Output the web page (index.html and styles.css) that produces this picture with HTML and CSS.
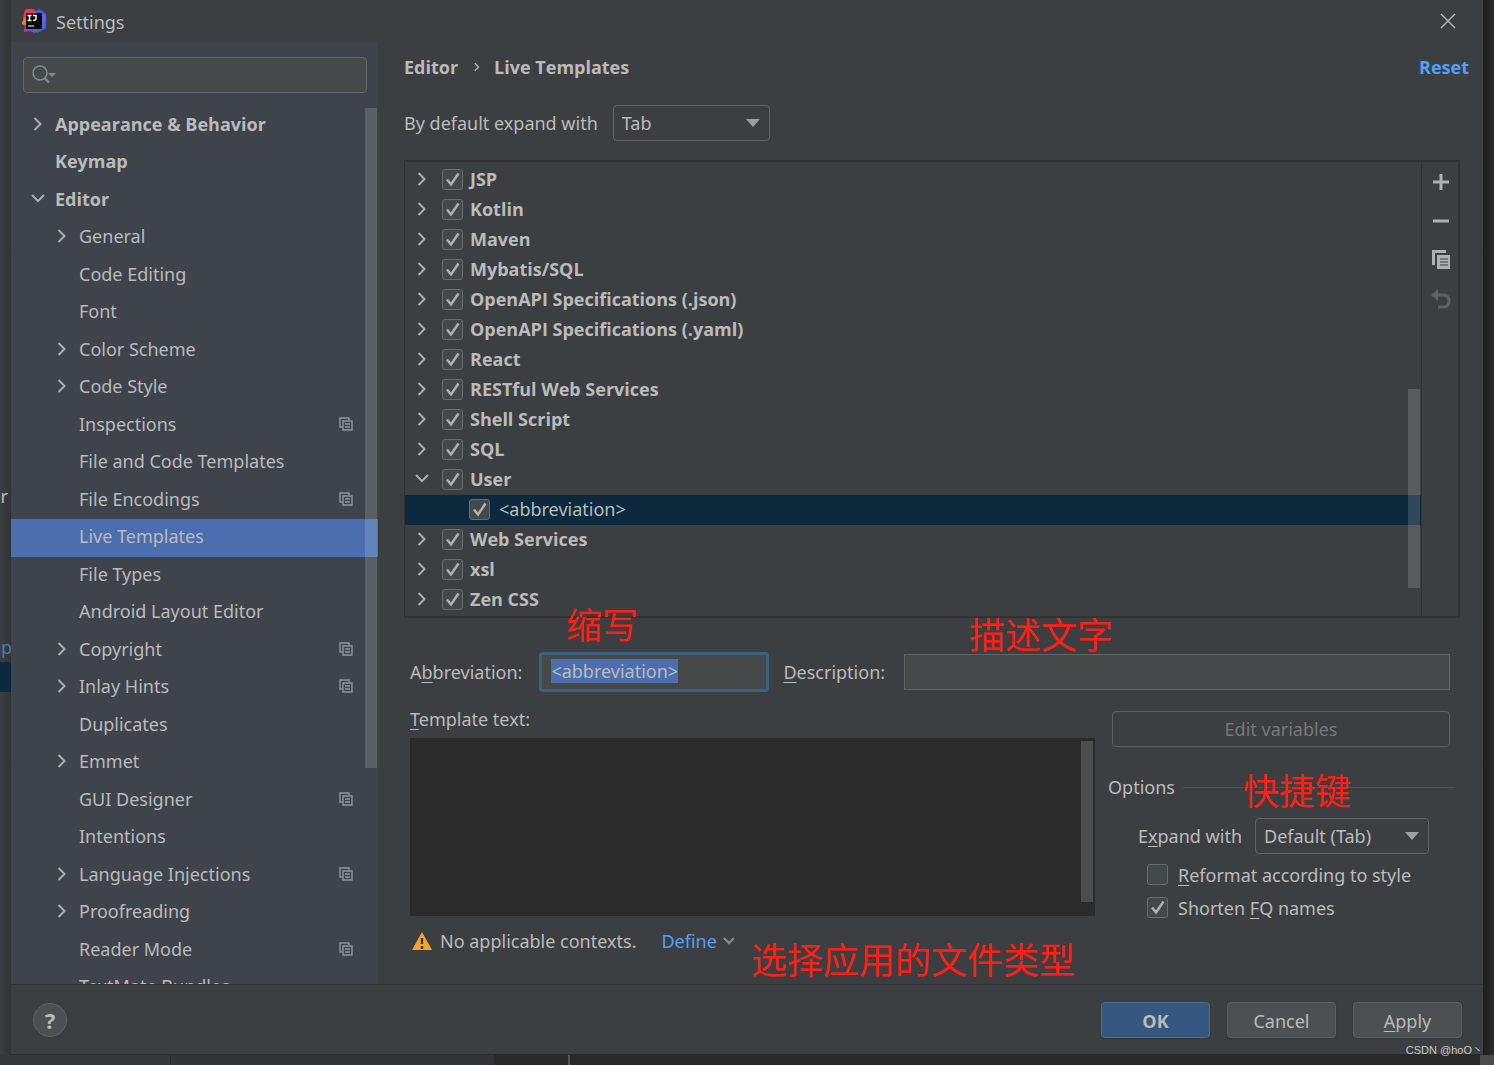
FILE: index.html
```html
<!DOCTYPE html>
<html lang="en">
<head>
<meta charset="utf-8">
<title>Settings</title>
<link rel="stylesheet" href="styles.css">
</head>
<body>
<svg class="defs" aria-hidden="true">
  <symbol id="right" viewBox="0 0 16 16"><path d="M4.500 2 10.500 8l-6 6" fill="none" stroke="currentColor" stroke-width="2"/></symbol>
  <symbol id="down" viewBox="0 0 16 16"><path d="M2 4 8 10l6-6" fill="none" stroke="currentColor" stroke-width="2"/></symbol>
  <symbol id="more" viewBox="0 0 12 12"><path d="M1 3 6 8l5-5" fill="none" stroke="currentColor" stroke-width="2.400"/></symbol>
  <symbol id="arrow" viewBox="0 0 14 8"><path d="M0 0h14L7 8z" fill="currentColor"/></symbol>
  <symbol id="scope" viewBox="0 0 14 14"><path d="M3 10H1V1h9v2M4 4h9v9H4zM6 7h5M6 10h5" fill="none" stroke="currentColor" stroke-width="1.400"/></symbol>
</svg>
<div class="desktop">
  <aside class="edge-left"><span class="edge-text">er</span><span class="edge-link">p</span><span class="edge-row"></span></aside>
  <div class="window">
    <header class="titlebar">
      <svg class="logo" viewBox="0 0 24 24">
        <path d="M1 9 3 1l2-1h6l4 3v9H1z" fill="#fe315d"/>
        <path d="M0 13 4 8v9l-4-2z" fill="#f97a12"/>
        <path d="m2 23 1-7h10v8l-5-2z" fill="#a83fc4"/>
        <path d="m13 3 4-3 7 5v14l-9 5-5-3z" fill="#3b68ea"/>
        <path d="M20 3 24 6v6l-4 4z" fill="#6b57ff"/>
        <path d="M4 4h16v16H4z" fill="#080808"/>
        <path d="M5.500 6.500h4M7.500 6v6M5.500 11.500h4M11 6.500h3v3q0 2-3 2" fill="none" stroke="#fff" stroke-width="1.500"/>
        <path d="M6 17h6" stroke="#ddd" stroke-width="1.200"/>
      </svg>
      <h1 class="title">Settings</h1>
      <button class="close" aria-label="Close"><svg viewBox="0 0 16 16"><path d="m1 1 14 14M15 1 1 15" stroke="currentColor" stroke-width="1.400"/></svg></button>
    </header>
    <div class="main">
      <nav class="sidebar">
        <div class="search">
          <svg viewBox="0 0 26 20"><circle cx="9" cy="8" r="7" fill="none" stroke="currentColor" stroke-width="1.600"/><path d="m13.500 13 4.500 4.500" stroke="currentColor" stroke-width="2.400"/><path d="M17 8h8l-4 4z" fill="currentColor"/></svg>
          <input type="search" aria-label="Search settings">
        </div>
        <div class="tree">
          <a href="#" class="row top"><svg class="tw"><use href="#right"/></svg><span>Appearance &amp; Behavior</span></a>
          <a href="#" class="row top"><i class="tw"></i><span>Keymap</span></a>
          <a href="#" class="row top"><svg class="tw"><use href="#down"/></svg><span>Editor</span></a>
          <a href="#" class="row"><svg class="tw"><use href="#right"/></svg><span>General</span></a>
          <a href="#" class="row"><i class="tw"></i><span>Code Editing</span></a>
          <a href="#" class="row"><i class="tw"></i><span>Font</span></a>
          <a href="#" class="row"><svg class="tw"><use href="#right"/></svg><span>Color Scheme</span></a>
          <a href="#" class="row"><svg class="tw"><use href="#right"/></svg><span>Code Style</span></a>
          <a href="#" class="row"><i class="tw"></i><span>Inspections</span><svg class="scope"><use href="#scope"/></svg></a>
          <a href="#" class="row"><i class="tw"></i><span>File and Code Templates</span></a>
          <a href="#" class="row"><i class="tw"></i><span>File Encodings</span><svg class="scope"><use href="#scope"/></svg></a>
          <a href="#" class="row current" aria-current="page"><i class="tw"></i><span>Live Templates</span></a>
          <a href="#" class="row"><i class="tw"></i><span>File Types</span></a>
          <a href="#" class="row"><i class="tw"></i><span>Android Layout Editor</span></a>
          <a href="#" class="row"><svg class="tw"><use href="#right"/></svg><span>Copyright</span><svg class="scope"><use href="#scope"/></svg></a>
          <a href="#" class="row"><svg class="tw"><use href="#right"/></svg><span>Inlay Hints</span><svg class="scope"><use href="#scope"/></svg></a>
          <a href="#" class="row"><i class="tw"></i><span>Duplicates</span></a>
          <a href="#" class="row"><svg class="tw"><use href="#right"/></svg><span>Emmet</span></a>
          <a href="#" class="row"><i class="tw"></i><span>GUI Designer</span><svg class="scope"><use href="#scope"/></svg></a>
          <a href="#" class="row"><i class="tw"></i><span>Intentions</span></a>
          <a href="#" class="row"><svg class="tw"><use href="#right"/></svg><span>Language Injections</span><svg class="scope"><use href="#scope"/></svg></a>
          <a href="#" class="row"><svg class="tw"><use href="#right"/></svg><span>Proofreading</span></a>
          <a href="#" class="row"><i class="tw"></i><span>Reader Mode</span><svg class="scope"><use href="#scope"/></svg></a>
          <a href="#" class="row"><i class="tw"></i><span>TextMate Bundles</span></a>
          <span class="thumb tree-thumb"></span>
        </div>
      </nav>
      <main class="content">
        <div class="crumbs"><span>Editor</span><svg class="sep"><use href="#right"/></svg><span>Live Templates</span><a href="#" class="reset">Reset</a></div>
        <div class="default">
          <label for="default-key">By default expand with</label>
          <span class="combo combo-short"><select id="default-key"><option>Tab</option></select><svg><use href="#arrow"/></svg></span>
        </div>
        <section class="templates">
          <div class="groups">
            <div class="group"><svg class="tw"><use href="#right"/></svg><label><input type="checkbox" checked>JSP</label></div>
            <div class="group"><svg class="tw"><use href="#right"/></svg><label><input type="checkbox" checked>Kotlin</label></div>
            <div class="group"><svg class="tw"><use href="#right"/></svg><label><input type="checkbox" checked>Maven</label></div>
            <div class="group"><svg class="tw"><use href="#right"/></svg><label><input type="checkbox" checked>Mybatis/SQL</label></div>
            <div class="group"><svg class="tw"><use href="#right"/></svg><label><input type="checkbox" checked>OpenAPI Specifications (.json)</label></div>
            <div class="group"><svg class="tw"><use href="#right"/></svg><label><input type="checkbox" checked>OpenAPI Specifications (.yaml)</label></div>
            <div class="group"><svg class="tw"><use href="#right"/></svg><label><input type="checkbox" checked>React</label></div>
            <div class="group"><svg class="tw"><use href="#right"/></svg><label><input type="checkbox" checked>RESTful Web Services</label></div>
            <div class="group"><svg class="tw"><use href="#right"/></svg><label><input type="checkbox" checked>Shell Script</label></div>
            <div class="group"><svg class="tw"><use href="#right"/></svg><label><input type="checkbox" checked>SQL</label></div>
            <div class="group"><svg class="tw"><use href="#down"/></svg><label><input type="checkbox" checked>User</label></div>
            <div class="group leaf"><label><input type="checkbox" checked>&lt;abbreviation&gt;</label></div>
            <div class="group"><svg class="tw"><use href="#right"/></svg><label><input type="checkbox" checked>Web Services</label></div>
            <div class="group"><svg class="tw"><use href="#right"/></svg><label><input type="checkbox" checked>xsl</label></div>
            <div class="group"><svg class="tw"><use href="#right"/></svg><label><input type="checkbox" checked>Zen CSS</label></div>
            <span class="thumb group-thumb"></span>
          </div>
          <div class="tools">
            <button aria-label="Add"><svg viewBox="0 0 20 20"><path d="M10 2v16M2 10h16" stroke="currentColor" stroke-width="3"/></svg></button>
            <button aria-label="Remove"><svg viewBox="0 0 20 20"><path d="M2 10h16" stroke="currentColor" stroke-width="3"/></svg></button>
            <button aria-label="Duplicate"><svg viewBox="0 0 20 20"><path d="M2.500 15V1.500H15" fill="none" stroke="currentColor" stroke-width="3"/><path d="M5 4h14v16H5z" fill="#3c3f41"/><path d="M6 5h13v14H6z" fill="currentColor"/><path d="M9 9h8M9 12h8M9 15h8" stroke="#3c3f41" stroke-width="1.200"/></svg></button>
            <button aria-label="Restore" disabled><svg viewBox="0 0 20 20"><path d="M5 6h7q6 0 6 6t-6 6H7" fill="none" stroke="currentColor" stroke-width="3"/><path d="M7 0v12L0 6z" fill="currentColor"/></svg></button>
          </div>
        </section>
        <form class="editor">
          <div class="fields">
            <label for="abbr">A<u>b</u>breviation:</label>
            <input id="abbr" class="abbr" value="&lt;abbreviation&gt;" autofocus>
            <label for="desc"><u>D</u>escription:</label>
            <input id="desc" class="desc">
          </div>
          <div class="body">
            <div class="text">
              <label for="tpl"><u>T</u>emplate text:</label>
              <div class="area"><textarea id="tpl"></textarea><span class="area-thumb"></span></div>
              <p class="context"><svg viewBox="0 0 22 20"><path d="M11 1 21 19H1z" fill="#f0a732"/><path d="M11 7v6M11 15v3" stroke="#3c3f41" stroke-width="2.400"/></svg><span>No applicable contexts.</span><a href="#">Define</a><svg class="more"><use href="#more"/></svg></p>
            </div>
            <div class="side">
              <button type="button" class="edit" disabled>Edit variables</button>
              <fieldset class="options">
                <legend>Options</legend>
                <div class="expand"><label for="key">E<u>x</u>pand with</label><span class="combo combo-long"><select id="key"><option>Default (Tab)</option></select><svg><use href="#arrow"/></svg></span></div>
                <label class="check"><input type="checkbox"><span><u>R</u>eformat according to style</span></label>
                <label class="check"><input type="checkbox" checked><span>Shorten <u>F</u>Q names</span></label>
              </fieldset>
            </div>
          </div>
        </form>
      </main>
    </div>
    <footer class="footer">
      <button class="help" aria-label="Help">?</button>
      <button class="btn ok">OK</button>
      <button class="btn">Cancel</button>
      <button class="btn"><u>A</u>pply</button>
    </footer>
  </div>
  <aside class="edge-right"></aside>
  <div class="edge-bottom"><i class="e1"></i><i class="e2"></i><i class="e3"></i><i class="e4"></i><i class="e5"></i></div>
  <span class="note n1" lang="zh">缩写</span>
  <span class="note n2" lang="zh">描述文字</span>
  <span class="note n3" lang="zh">快捷键</span>
  <span class="note n4" lang="zh">选择应用的文件类型</span>
  <span class="watermark">CSDN @hoO丶</span>
</div>
<script src="app.js"></script>
</body>
</html>
```
FILE: app.js
```js
// The abbreviation is ready to be typed over when the dialog opens.
const abbr = document.getElementById('abbr');
abbr.focus();
abbr.select();
```
FILE: styles.css
```css
* { box-sizing: border-box; }
body {
  margin: 0;
  color: #bbbbbb;
  font: 18px/26px "Noto Sans", "Open Sans", "Noto Sans CJK SC", sans-serif;
}
button, input, select, textarea { font: inherit; color: inherit; }
button { padding: 0; border: 0; background: none; }
a { color: #589df6; text-decoration: none; }
u { text-decoration-thickness: 1px; text-underline-offset: 3px; }
svg { display: block; flex: none; }
.defs { display: none; }

.desktop {
  position: relative;
  display: grid;
  grid-template: minmax(0, 1fr) 10px / 11px minmax(0, 1fr) 11px;
  height: 100vh;
  min-height: 1000px;
  overflow: hidden;
  background: #2b2b2b;
}
.edge-left {
  display: flex;
  flex-direction: column;
  align-items: flex-end;
  overflow: hidden;
  padding-top: 483px;
  background: linear-gradient(90deg, #3c3f41, #303335);
}
.edge-text { width: 30px; height: 151px; padding-right: 3px; text-align: right; }
.edge-link { width: 11px; height: 28px; padding-left: 1px; color: #4a78b0; }
.edge-row { width: 11px; height: 30px; background: #0d293e; }
.edge-right { background: linear-gradient(90deg, #1f1f1f, #292929); }
.edge-bottom { grid-column: 1 / 4; display: flex; background: #292929; }
.e1 { width: 171px; background: #35383a; border-right: 1px solid #292b2c; }
.e2 { width: 323px; background: #323537; }
.e3 { width: 74px; }
.e4 { width: 2px; background: #555555; }
.e5 { width: 14px; margin-left: auto; background: #4a4c4e; }

.window {
  display: flex;
  flex-direction: column;
  min-width: 0;
  background: #3c3f41;
  border-bottom: 1px solid #2b2b2b;
}
.titlebar { display: flex; align-items: center; height: 42px; padding: 0 27px 0 11px; }
.logo { width: 24px; height: 24px; }
.title { flex: 1; margin: 0 0 0 10px; padding-top: 2px; font-size: 18px; font-weight: 400; }
.close svg { width: 16px; height: 16px; }

.main { flex: 1; display: flex; min-height: 0; }
.sidebar { display: flex; flex-direction: column; width: 367px; background: #3e434c; }
.search {
  display: flex;
  align-items: center;
  height: 36px;
  margin: 15px 11px 14px 12px;
  padding: 0 7px;
  border: 1px solid #646464;
  border-radius: 4px;
  background: #45494a;
  color: #7f8b91;
}
.search svg { width: 26px; height: 20px; }
.search input { flex: 1; min-width: 0; border: 0; background: none; outline: 0; }
.tree { position: relative; flex: 1; min-height: 0; overflow: hidden; }
.row { display: flex; align-items: center; height: 37px; padding: 0 25px 4px 43px; color: #bbbbbb; }
.row:nth-child(even) { height: 38px; }
.row span { flex: 1; }
.row.top { padding-left: 19px; }
.row.top, .crumbs, .group, .ok { font-family: "Open Sans", "Noto Sans", sans-serif; font-weight: 700; }
.tw { width: 16px; height: 16px; margin-right: 9px; color: #adadad; }
.scope { width: 14px; height: 14px; color: #8f979c; }
.row.current { background: #4b6eaf; }
.thumb { position: absolute; width: 12px; background: rgba(255, 255, 255, .15); }
.tree-thumb { top: 1px; right: 1px; height: 660px; max-height: 80%; }

.content { flex: 1; display: flex; flex-direction: column; min-width: 0; padding: 0 23px 0 26px; }
.crumbs { display: flex; align-items: center; height: 50px; margin-right: -9px; }
.sep { width: 10px; height: 10px; margin: 0 12px 0 14px; }
.reset { margin-left: auto; }
.default { display: flex; align-items: center; gap: 15px; height: 62px; }
.combo { display: grid; align-items: center; height: 36px; }
.combo select, .combo svg { grid-area: 1 / 1; }
.combo select {
  width: 100%;
  height: 36px;
  padding: 0 8px;
  appearance: none;
  border: 1px solid #646464;
  border-radius: 4px;
  background: #3c3f41;
}
.combo svg { width: 14px; height: 8px; margin-right: 10px; justify-self: end; color: #9da0a3; pointer-events: none; }
.combo-short { width: 157px; }
.combo-long { width: 174px; }

.templates { display: flex; margin-top: 6px; border: 2px solid #323232; border-left-width: 1px; }
.groups { position: relative; flex: 1; padding: 3px 0 1px; }
.group { display: flex; align-items: center; height: 30px; padding: 0 0 2px 9px; }
.group .tw { margin-right: 12px; }
.group label { display: flex; align-items: center; gap: 7px; }
.group.leaf { padding-left: 64px; background: #0d293e; font-family: "Noto Sans", sans-serif; font-weight: 400; }
.leaf label { gap: 9px; }
.group-thumb { right: 1px; bottom: 28px; height: 199px; }
input[type="checkbox"] {
  flex: none;
  width: 21px;
  height: 21px;
  margin: 0;
  appearance: none;
  border: 1px solid #6b6b6b;
  border-radius: 3px;
  background: #43494a;
}
input[type="checkbox"]:checked {
  background: #43494a url("data:image/svg+xml,%3Csvg xmlns='http://www.w3.org/2000/svg' viewBox='0 0 19 19'%3E%3Cpath d='M4 9.500l4 5 7.500-11' fill='none' stroke='%23b0b0b0' stroke-width='2.500'/%3E%3C/svg%3E");
}
.tools { display: flex; flex-direction: column; gap: 19px; width: 37px; padding: 10px 0 0 9px; border-left: 1px solid #323232; color: #afb1b3; }
.tools svg { width: 20px; height: 20px; }
.tools button:disabled { color: #616161; }

.editor { padding: 34px 10px 0 6px; }
.fields { display: flex; align-items: center; height: 40px; }
.fields input { min-width: 0; border: 1px solid #646464; background: #45494a; outline: 0; }
.fields .abbr { width: 230px; height: 40px; margin: 0 14px 0 17px; padding: 0 9px 2px; border: 3px solid #3d6185; border-radius: 4px; }
.fields .desc { flex: 1; height: 36px; margin-left: 19px; padding: 0 8px; }
.abbr::selection { background: #4b6eaf; color: #bbbbbb; }
.body { display: flex; gap: 13px; }
.text { flex: 1; min-width: 0; padding-top: 14px; }
.text > label { display: block; height: 32px; }
.area { display: flex; height: 178px; padding: 3px 2px 3px 0; background: #2b2b2b; }
.area textarea { flex: 1; border: 0; outline: 0; resize: none; background: none; }
.area-thumb { width: 12px; height: 161px; background: #4d4d4d; }
.context { display: flex; align-items: center; margin: 12px 0 0; }
.context svg { width: 22px; height: 20px; margin: 0 7px 0 1px; }
.context a { margin-left: 25px; }
.context .more { width: 12px; height: 12px; margin: 0 0 0 6px; color: #7f8b91; }
.side { width: 342px; padding-top: 19px; }
.edit { display: block; width: 338px; height: 36px; margin-left: 4px; border: 1px solid #5e6060; border-radius: 4px; color: #777777; }
.options { margin: 27px -5px 0 0; padding: 0; border: 0; }
.options legend { display: flex; align-items: center; gap: 8px; width: 100%; padding: 0; }
.options legend::after { content: ""; flex: 1; height: 1px; background: #515151; }
.expand { display: flex; align-items: center; gap: 13px; margin: 18px 0 4px 30px; }
.check { display: flex; align-items: center; gap: 10px; height: 33px; margin-left: 39px; }

.footer { display: flex; align-items: center; gap: 17px; height: 70px; padding: 0 21px 0 22px; border-top: 1px solid #323232; }
.help { width: 34px; height: 34px; margin-right: auto; border: 1px solid #616365; border-radius: 50%; background: #4c5052; font-size: 22px; font-weight: 700; }
.btn { width: 109px; height: 36px; padding-top: 2px; border: 1px solid #5e6060; border-radius: 4px; background: #4c5052; box-shadow: 0 1px 2px #35383a; }
.ok { border-color: #4c708c; background: #365880; }

.note { position: absolute; color: #ff1e14; font: 36px/40px "Noto Sans CJK SC", sans-serif; white-space: nowrap; }
.n1 { left: 566px; top: 603px; }
.n2 { left: 969px; top: 613px; }
.n3 { left: 1243px; top: 769px; }
.n4 { left: 751px; top: 938px; }
.watermark { position: absolute; right: 11px; bottom: 7px; color: #c8c8c8; font: 11px/16px "Liberation Sans", "Noto Sans CJK SC", sans-serif; }
```
